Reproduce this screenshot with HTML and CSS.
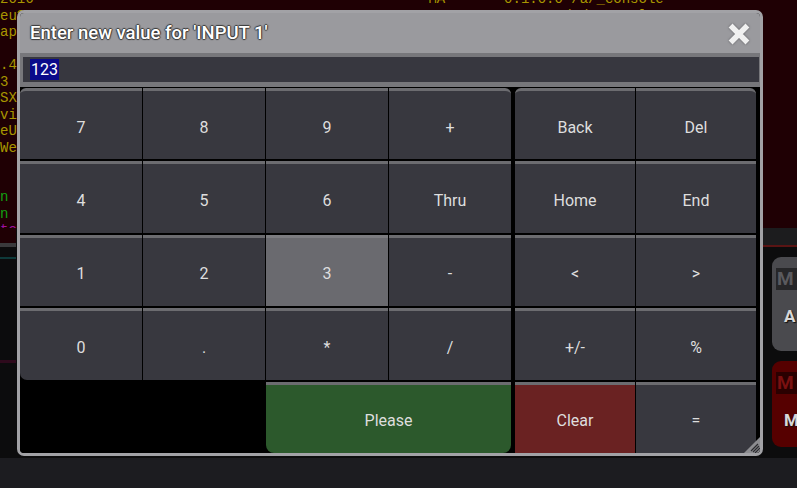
FILE: index.html
```html
<!DOCTYPE html>
<html>
<head>
<meta charset="utf-8">
<link rel="stylesheet" href="styles.css">
</head>
<body>
<div class="screen">
  <div class="console">
<pre class="log"><span class="y">2016                                               MA       0.1.0.0 /a/_console</span>
<span class="y">eu?                                                        0.1.2.0 /a/_console</span>
<span class="y">apl</span>

<span class="y">.4</span>
<span class="y">3</span>
<span class="y">SXI</span>
<span class="y">vi</span>
<span class="y">eU</span>
<span class="y">Wel</span>


<span class="g">n  l</span>
<span class="g">n  l</span>
<span class="m">te</span></pre>
  </div>
  <div class="band">
    <div class="band-left"></div>
    <div class="band-right"></div>
  </div>
  <div class="lower">
    <div class="lower-left">
      <div class="teal"></div>
      <div class="plum"></div>
    </div>
    <div class="lower-right">
      <div class="exec gray"><span class="badge">M</span><span class="exec-label">A</span></div>
      <div class="exec red"><span class="badge">M</span><span class="exec-label">M</span></div>
    </div>
  </div>
  <div class="bottombar"></div>

  <div class="dialog">
    <div class="title">
      <span class="title-text">Enter new value for 'INPUT 1'</span>
      <svg class="close" width="22" height="22" viewBox="0 0 22 22"><path d="M4.5 4.5 L17.5 17.5 M17.5 4.5 L4.5 17.5" stroke="#f0f0f0" stroke-width="5.5" stroke-linecap="square"/></svg>
    </div>
    <div class="inputrow">
      <div class="field"><span class="sel">123</span></div>
    </div>
    <div class="keypad">
      <div class="numpad">
        <div class="key tl">7</div>
        <div class="key">8</div>
        <div class="key">9</div>
        <div class="key tr">+</div>
        <div class="key">4</div>
        <div class="key">5</div>
        <div class="key">6</div>
        <div class="key">Thru</div>
        <div class="key">1</div>
        <div class="key">2</div>
        <div class="key active">3</div>
        <div class="key">-</div>
        <div class="key bl">0</div>
        <div class="key">.</div>
        <div class="key">*</div>
        <div class="key">/</div>
        <div class="blank"></div>
        <div class="key please">Please</div>
      </div>
      <div class="editpad">
        <div class="key tl">Back</div>
        <div class="key tr">Del</div>
        <div class="key">Home</div>
        <div class="key">End</div>
        <div class="key">&lt;</div>
        <div class="key">&gt;</div>
        <div class="key">+/-</div>
        <div class="key">%</div>
        <div class="key clear">Clear</div>
        <div class="key">=</div>
      </div>
    </div>
    <svg class="grip" width="16" height="16" viewBox="0 0 16 16"><path d="M16 0 L16 16 L0 16 Z" fill="#8c8c90"/><path d="M7 14 L14 7 M9 15 L15 9 M11 16 L16 11" stroke="#2a2a2e" stroke-width="1.2"/></svg>
  </div>
</div>
</body>
</html>
```
FILE: styles.css
```css
* { box-sizing: border-box; }
html, body { margin: 0; padding: 0; }
body { width: 797px; height: 488px; overflow: hidden; background: #0c0c0d; font-family: Roboto, "Liberation Sans", sans-serif; }

.screen { position: relative; width: 797px; height: 488px; display: flex; flex-direction: column; }

.console { height: 228px; background: #1f0004; overflow: hidden; }
.log { margin: -9px 0 0 0; font-family: "Liberation Mono", "DejaVu Sans Mono", monospace; font-size: 14px; line-height: 16.5px; }
.y { color: #a89600; }
.g { color: #12a012; }
.m { color: #a010a0; }

.band { height: 19px; display: flex; justify-content: space-between; }
.band-left { width: 16px; background: #1f0004; border-bottom: 4px solid #3a3a3c; }
.band-right { width: 34px; background: #1c1c1e; border-bottom: 2px solid #5a1414; }

.lower { flex: 1; display: flex; justify-content: space-between; }
.lower-left { width: 16px; display: flex; flex-direction: column; }
.teal { height: 2px; margin-top: 10px; background: #0e3a3a; }
.plum { height: 3px; margin-top: 101px; background: #2e0a1c; }
.lower-right { width: 25px; display: flex; flex-direction: column; gap: 10px; padding-top: 10px; }
.exec { height: 94px; border-radius: 9px 0 0 9px; position: relative; display: flex; flex-direction: column; padding: 11px 0 0 4px; }
.exec.gray { background: #4a4a4e; }
.exec.red { height: 86px; background: #560000; }
.badge { width: 22px; height: 22px; background: #262628; color: #5a5a5e; font-size: 19px; font-weight: 700; line-height: 22px; padding-left: 1px; }
.exec.red .badge { background: #2a0000; color: #7a1010; }
.exec-label { margin-top: 16px; padding-left: 8px; color: #d8d8d8; font-size: 17px; font-weight: 700; text-shadow: 1px 1px 1px #111; }

.bottombar { height: 30px; background: #1c1c20; }

.dialog { position: absolute; left: 17px; top: 10px; width: 746px; height: 446px; border: 3px solid #a2a2a6; border-radius: 7px; background: #000; display: flex; flex-direction: column; overflow: hidden; }

.title { height: 40px; flex: none; background: #9a9a9e; display: flex; align-items: center; justify-content: space-between; padding: 0 10px 0 10px; }
.title-text { color: #ffffff; font-size: 18.5px; font-weight: 500; text-shadow: -1px 0 1px #3a3a3a, 1px 0 1px #3a3a3a, 0 -1px 1px #3a3a3a, 0 1px 1px #3a3a3a; }
.close { filter: drop-shadow(0 0 1px #5a5a5e); margin-top: 1px; }

.inputrow { height: 34px; flex: none; background: #77777b; padding: 4px 1px 5px 3px; }
.field { height: 100%; background: #37373f; display: flex; align-items: center; padding-left: 7px; }
.sel { background: #0a0a8a; color: #ffffff; font-size: 16px; line-height: 21px; height: 21px; padding: 0 1px; }

.keypad { flex: 1; display: flex; gap: 4px; padding: 1px 4px 0 0; background: #000; }
.numpad { width: 491px; display: grid; grid-template-columns: repeat(4, 1fr); grid-template-rows: repeat(5, 1fr); column-gap: 1px; row-gap: 2px; }
.editpad { width: 241px; display: grid; grid-template-columns: repeat(2, 1fr); grid-template-rows: repeat(5, 1fr); column-gap: 1px; row-gap: 2px; }

.key { background: #38383f; border-top: 3px solid #6c6c70; color: #dedede; font-size: 16px; display: flex; align-items: center; justify-content: center; padding-top: 4px; }
.key.active { background: #6a6a6f; border-top-color: #7c7c80; }
.key.please { grid-column: 3 / span 2; background: #2c592c; border-radius: 0 0 8px 8px; }
.key.clear { background: #6a2222; }
.blank { grid-column: 1 / span 2; }
.tl { border-top-left-radius: 6px; }
.tr { border-top-right-radius: 6px; }
.bl { border-bottom-left-radius: 7px; }

.grip { position: absolute; right: 0; bottom: 0; }
```
